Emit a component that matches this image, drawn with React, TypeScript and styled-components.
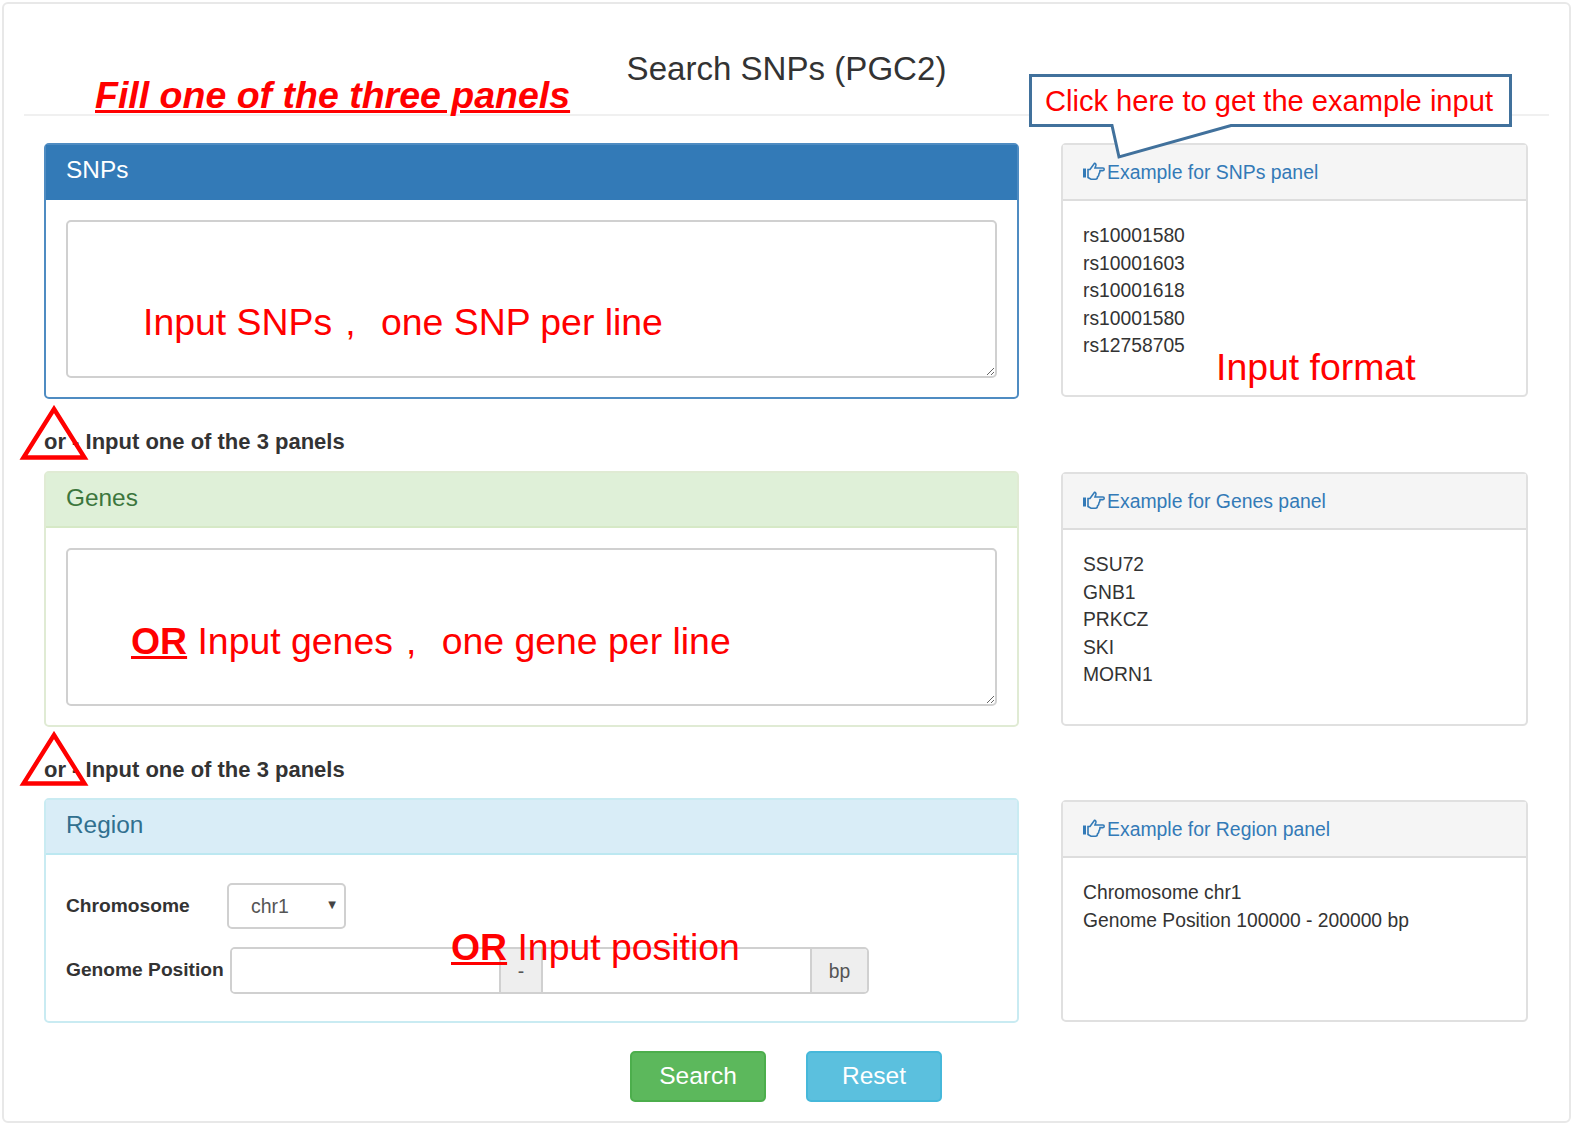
import React from "react";
import styled, { createGlobalStyle } from "styled-components";

const GlobalStyle = createGlobalStyle`
  html, body {
    margin: 0;
    padding: 0;
    background: #fff;
  }
  body {
    font-family: "Liberation Sans", Arial, sans-serif;
    font-size: 19.3px;
    color: #333;
  }
`;

type Tone = "primary" | "success" | "info";

const tones = {
  primary: { border: "#4f8cc2", line: "#337ab7", bg: "#337ab7", color: "#fff" },
  success: { border: "#e0ebd4", line: "#d6e9c6", bg: "#dff0d8", color: "#3c763d" },
  info: { border: "#c9ebf2", line: "#bce8f1", bg: "#d9edf7", color: "#31708f" },
};

const examples = [
  {
    title: "Example for SNPs panel",
    lines: ["rs10001580", "rs10001603", "rs10001618", "rs10001580", "rs12758705"],
    height: 254,
  },
  {
    title: "Example for Genes panel",
    lines: ["SSU72", "GNB1", "PRKCZ", "SKI", "MORN1"],
    height: 254,
  },
  {
    title: "Example for Region panel",
    lines: ["Chromosome chr1", "Genome Position 100000 - 200000 bp"],
    height: 222,
  },
];

const HandIcon = () => (
  <HandSvg viewBox="0 0 22 18">
    <rect x="0" y="6.5" width="3" height="9" fill="#337ab7" />
    <path
      d="M5 7.5H7L11.5 1.2c1.2 0 1.7 1.2 1.3 2.6L12 6H20c1.6 0 1.6 2.6 0 2.6H17c0 1.6-.4 2.6-1 3.2 0 1.6-.5 2.6-1.5 3.2 0 1.2-1 2.2-2 2.2H8L5 15.5Z"
      fill="none"
      stroke="#337ab7"
      strokeWidth="1.6"
    />
  </HandSvg>
);

const Triangle = ({ $top }: { $top: number }) => (
  <TriangleSvg viewBox="0 0 70 56" $top={$top}>
    <path d="M35 4L65.5 52.5H4.5Z" fill="none" stroke="#f00" strokeWidth="4.4" />
  </TriangleSvg>
);

const App = () => {
  return (
    <Page>
      <GlobalStyle />
      <Frame>
        <Title>Search SNPs (PGC2)</Title>
        <Columns>
          <LeftColumn>
            <Panel $tone="primary" $height={256}>
              <PanelHeading $tone="primary">SNPs</PanelHeading>
              <PanelBody>
                <TextBox />
              </PanelBody>
            </Panel>
            <OrLabel $height={72}>or - Input one of the 3 panels</OrLabel>
            <Panel $tone="success" $height={256}>
              <PanelHeading $tone="success">Genes</PanelHeading>
              <PanelBody>
                <TextBox />
              </PanelBody>
            </Panel>
            <OrLabel $height={71}>or - Input one of the 3 panels</OrLabel>
            <Panel $tone="info" $height={225}>
              <PanelHeading $tone="info">Region</PanelHeading>
              <RegionBody>
                <FormRow>
                  <FieldLabel>Chromosome</FieldLabel>
                  <SelectWrap>
                    <ChromSelect defaultValue="chr1">
                      <option>chr1</option>
                    </ChromSelect>
                  </SelectWrap>
                </FormRow>
                <PositionRow>
                  <FieldLabel>Genome Position</FieldLabel>
                  <InputGroup>
                    <GroupInput />
                    <Addon $width={44}>-</Addon>
                    <GroupInput />
                    <Addon $width={57}>bp</Addon>
                  </InputGroup>
                </PositionRow>
              </RegionBody>
            </Panel>
            <Buttons>
              <ActionButton $bg="#5cb85c" $border="#4cae4c">Search</ActionButton>
              <ActionButton $bg="#5bc0de" $border="#46b8da">Reset</ActionButton>
            </Buttons>
          </LeftColumn>
          <RightColumn>
            {examples.map((ex) => (
              <ExamplePanel key={ex.title} $height={ex.height}>
                <ExampleHeading>
                  <ExampleLink>
                    <HandIcon />
                    {ex.title}
                  </ExampleLink>
                </ExampleHeading>
                <ExampleBody>
                  {ex.lines.map((line, i) => (
                    <div key={i}>{line}</div>
                  ))}
                </ExampleBody>
              </ExamplePanel>
            ))}
          </RightColumn>
        </Columns>

        <FillNote>Fill one of the three panels</FillNote>
        <Note $left={139} $top={295}>Input SNPs<Comma>,</Comma> one SNP per line</Note>
        <Note $left={127} $top={614}><OrWord>OR</OrWord> Input genes<Comma>,</Comma> one gene per line</Note>
        <Note $left={447} $top={920}><OrWord>OR</OrWord> Input position</Note>
        <Note $left={1212} $top={340}>Input format</Note>
        <Triangle $top={403} />
        <Triangle $top={729} />
        <Callout viewBox="0 0 490 92">
          <path
            d="M1.5 1.5H481.5V51.5H202L90 83 83 51.5H1.5Z"
            fill="#fff"
            stroke="#41719c"
            strokeWidth="3"
          />
        </Callout>
        <CalloutText>Click here to get the example input</CalloutText>
      </Frame>
    </Page>
  );
};

const Page = styled.div`
  width: 1573px;
  height: 1125px;
  padding: 2px;
  box-sizing: border-box;
`;

const Frame = styled.div`
  position: relative;
  height: 1121px;
  box-sizing: border-box;
  border: 2px solid #e8e8e8;
  border-radius: 6px;
  padding: 0 20px;
`;

const Title = styled.div`
  height: 112px;
  box-sizing: border-box;
  padding-top: 45px;
  text-align: center;
  font-size: 33.1px;
  line-height: 40px;
  color: #333;
  border-bottom: 2px solid #f0f0f0;
`;

const Columns = styled.div`
  display: grid;
  grid-template-columns: 975px 467px;
  gap: 42px;
  padding: 27px 20px 0;
`;

const LeftColumn = styled.div`
  display: flex;
  flex-direction: column;
`;

const RightColumn = styled.div`
  display: flex;
  flex-direction: column;
  gap: 75px;
`;

const Panel = styled.div<{ $tone: Tone; $height: number }>`
  height: ${(p) => p.$height}px;
  box-sizing: border-box;
  border: 2px solid ${(p) => tones[p.$tone].border};
  border-radius: 5px;
  background: #fff;
  display: flex;
  flex-direction: column;
`;

const PanelHeading = styled.div<{ $tone: Tone }>`
  height: 55px;
  box-sizing: border-box;
  flex: none;
  padding: 0 20px;
  line-height: 50px;
  font-size: 24.4px;
  background: ${(p) => tones[p.$tone].bg};
  color: ${(p) => tones[p.$tone].color};
  border-bottom: 2px solid ${(p) => tones[p.$tone].line};
`;

const PanelBody = styled.div`
  flex: 1;
  padding: 20px;
  display: flex;
`;

const TextBox = styled.textarea`
  flex: 1;
  box-sizing: border-box;
  height: 158px;
  border: 2px solid #d0d0d0;
  border-radius: 5px;
  background: #fff;
  outline: none;
  resize: vertical;
`;

const RegionBody = styled.div`
  flex: 1;
  padding: 28px 20px 0;
`;

const FormRow = styled.div`
  display: flex;
  align-items: center;
  height: 46px;
`;

const PositionRow = styled(FormRow)`
  margin-top: 18px;
`;

const FieldLabel = styled.div`
  font-size: 19.2px;
  font-weight: bold;
  min-width: 164px;
  color: #333;
`;

const SelectWrap = styled.div`
  position: relative;
  width: 119px;
  height: 46px;
  margin-left: -3px;

  &::after {
    content: "▼";
    position: absolute;
    right: 10px;
    top: 16px;
    font-family: "DejaVu Sans", sans-serif;
    font-size: 10px;
    color: #444;
    pointer-events: none;
  }
`;

const ChromSelect = styled.select`
  appearance: none;
  width: 100%;
  height: 100%;
  box-sizing: border-box;
  padding: 0 22px;
  border: 2px solid #d0d0d0;
  border-radius: 5px;
  background: #fff;
  font-family: inherit;
  font-size: 19.5px;
  color: #555;
`;

const InputGroup = styled.div`
  display: flex;
  width: 639px;
  height: 47px;
  box-sizing: border-box;
  border: 2px solid #d0d0d0;
  border-radius: 5px;
  overflow: hidden;
`;

const GroupInput = styled.input`
  flex: 1;
  min-width: 0;
  border: none;
  outline: none;
  padding: 0;
  background: #fff;
`;

const Addon = styled.div<{ $width: number }>`
  flex: none;
  width: ${(p) => p.$width}px;
  box-sizing: border-box;
  background: #eee;
  border-left: 2px solid #d0d0d0;
  border-right: 2px solid #d0d0d0;
  text-align: center;
  line-height: 45px;
  color: #555;
  font-size: 19.3px;

  &:last-child {
    border-right: none;
  }
`;

const OrLabel = styled.div<{ $height: number }>`
  height: ${(p) => p.$height}px;
  box-sizing: border-box;
  padding-top: 29px;
  font-size: 22px;
  line-height: 28px;
  font-weight: bold;
  color: #333;
`;

const Buttons = styled.div`
  display: flex;
  justify-content: flex-start;
  gap: 40px;
  padding: 28px 0 0 586px;
`;

const ActionButton = styled.button<{ $bg: string; $border: string }>`
  width: 136px;
  height: 51px;
  border: 2px solid ${(p) => p.$border};
  border-radius: 5px;
  background: ${(p) => p.$bg};
  color: #fff;
  font-family: inherit;
  font-size: 24.5px;
  padding: 0 0 2px;
`;

const ExamplePanel = styled.div<{ $height: number }>`
  height: ${(p) => p.$height}px;
  box-sizing: border-box;
  border: 2px solid #e0e0e0;
  border-radius: 5px;
  background: #fff;

  &:last-child {
    margin-top: -1px;
  }
`;

const ExampleHeading = styled.div`
  height: 56px;
  box-sizing: border-box;
  padding: 0 20px;
  background: #f5f5f5;
  border-bottom: 2px solid #ddd;
  display: flex;
  align-items: center;
`;

const ExampleLink = styled.a`
  display: flex;
  align-items: center;
  gap: 2px;
  color: #337ab7;
  font-size: 19.4px;
`;

const HandSvg = styled.svg`
  width: 22px;
  height: 18px;
  flex: none;
  margin-bottom: 3px;
`;

const ExampleBody = styled.div`
  padding: 21px 20px;
  font-size: 19.3px;
  line-height: 27.5px;
  color: #333;
`;

const FillNote = styled.div`
  position: absolute;
  left: 91px;
  top: 68px;
  font-size: 37.5px;
  line-height: 46px;
  font-weight: bold;
  font-style: italic;
  text-decoration: underline;
  color: #f00;
  white-space: nowrap;
`;

const Note = styled.div<{ $left: number; $top: number }>`
  position: absolute;
  left: ${(p) => p.$left}px;
  top: ${(p) => p.$top}px;
  font-size: 37.4px;
  line-height: 46px;
  color: #f00;
  white-space: nowrap;
`;

const OrWord = styled.span`
  font-weight: bold;
  text-decoration: underline;
`;

const Comma = styled.span`
  margin: 0 15px 0 13px;
`;

const TriangleSvg = styled.svg<{ $top: number }>`
  position: absolute;
  left: 15px;
  top: ${(p) => p.$top - 2}px;
  width: 70px;
  height: 56px;
`;

const Callout = styled.svg`
  position: absolute;
  left: 1025px;
  top: 70px;
  width: 490px;
  height: 92px;
`;

const CalloutText = styled.div`
  position: absolute;
  left: 1041px;
  top: 79px;
  font-size: 29.1px;
  line-height: 36px;
  color: #f00;
  white-space: nowrap;
`;

export default App;
